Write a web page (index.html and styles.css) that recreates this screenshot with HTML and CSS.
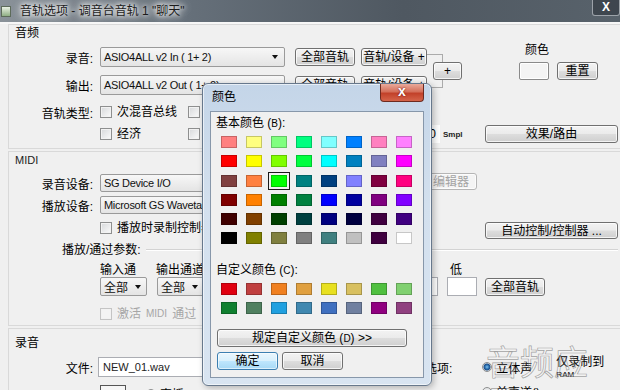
FILE: index.html
```html
<!DOCTYPE html>
<html lang="zh-CN">
<head>
  <meta charset="UTF-8">
  <title>音轨选项</title>
  <link rel="stylesheet" href="styles.css">
</head>
<body>
  <div class="window">
    <div class="titlebar">
      <span class="app-icon"></span>
      <span class="title">音轨选项 - 调音台音轨 1 "聊天"</span>
      <span class="win-close">X</span>
    </div>

    <!-- 音频 -->
    <section class="group audio">
      <h4>音频</h4>
      <div class="audio-body">
        <div class="io-rows">
          <div class="row">
            <span class="lbl">录音:</span>
            <div class="select io">ASIO4ALL v2 In ( 1+ 2)<i class="arrow"></i></div>
            <button class="btn all">全部音轨</button>
            <button class="btn dev">音轨/设备 +</button>
          </div>
          <div class="row">
            <span class="lbl">输出:</span>
            <div class="select io">ASIO4ALL v2 Out ( 1+ 2)<i class="arrow"></i></div>
            <button class="btn all">全部音轨</button>
            <button class="btn dev">音轨/设备 +</button>
          </div>
        </div>
        <div class="plus-wrap">
          <span class="bracket"></span>
          <button class="btn plus">+</button>
        </div>
        <div class="color-col">
          <div class="color-lbl">颜色</div>
          <div class="color-row">
            <span class="swatch-box"></span>
            <button class="btn reset">重置</button>
          </div>
        </div>
      </div>
      <div class="row type-row">
        <span class="lbl">音轨类型:</span>
        <label class="check first"><i class="chk"></i>次混音总线</label>
        <label class="check"><i class="chk"></i>输入监视</label>
      </div>
      <div class="row eco-row">
        <span class="lbl"></span>
        <label class="check first"><i class="chk"></i>经济</label>
        <label class="check"><i class="chk"></i></label>
        <span class="num offset">0</span>
        <span class="smpl">Smpl</span>
        <button class="btn wide-btn">效果/路由</button>
      </div>
    </section>

    <!-- MIDI -->
    <section class="group midi">
      <h4 class="latin">MIDI</h4>
      <div class="row dev-row first-dev">
        <span class="lbl">录音设备:</span>
        <div class="select mid">SG Device I/O<i class="arrow"></i></div>
        <button class="btn edit" disabled>编辑器</button>
      </div>
      <div class="row dev-row">
        <span class="lbl">播放设备:</span>
        <div class="select mid">Microsoft GS Wavetable Synth<i class="arrow"></i></div>
      </div>
      <div class="row rec-row">
        <span class="lbl"></span>
        <label class="check first"><i class="chk"></i>播放时录制控制器</label>
        <button class="btn wide-btn">自动控制/控制器 ...</button>
      </div>
      <div class="row param-row">
        <span class="param-lbl">播放/通过参数:</span>
        <span class="etched"></span>
      </div>
      <div class="row ch-labels">
        <span class="c1">输入通</span>
        <span class="c2">输出通道</span>
        <span class="c3">低</span>
      </div>
      <div class="row ch-row">
        <div class="select small">全部<i class="arrow"></i></div>
        <div class="select small next">全部<i class="arrow"></i></div>
        <span class="box in-a"></span>
        <span class="box in-b"></span>
        <button class="btn all-low">全部音轨</button>
      </div>
      <div class="row thru-row">
        <label class="check disabled"><i class="chk"></i>激活 <span class="latin-sm">MIDI</span> 通过</label>
      </div>
    </section>

    <!-- 录音 -->
    <section class="group record">
      <h4>录音</h4>
      <div class="row file-row">
        <span class="lbl">文件:</span>
        <span class="box file">NEW_01.wav</span>
        <span class="opt-lbl">选项:</span>
        <label class="radio on"><i class="rd"></i>立体声</label>
        <span class="ram">仅录制到<br><small>RAM</small></span>
      </div>
      <div class="row last-row">
        <span class="pick"></span>
        <label class="radio live"><i class="rd"></i>直播(</label>
        <label class="radio mono"><i class="rd"></i>单声道()</label>
      </div>
    </section>

    <span class="watermark">音频应用</span>

    <!-- 颜色 dialog -->
    <div class="dialog">
      <div class="dlg-title">
        <span>颜色</span>
        <span class="dlg-close">x</span>
      </div>
      <div class="dlg-client">
        <div class="dlg-lbl">基本颜色 (<u>B</u>):</div>
        <div class="swatches basic">
          <i style="background:#ff8080"></i><i style="background:#ffff80"></i><i style="background:#80ff80"></i><i style="background:#00ff80"></i><i style="background:#80ffff"></i><i style="background:#0080ff"></i><i style="background:#ff80c0"></i><i style="background:#ff80ff"></i>
          <i style="background:#ff0000"></i><i style="background:#ffff00"></i><i style="background:#80ff00"></i><i style="background:#00ff40"></i><i style="background:#00ffff"></i><i style="background:#0080c0"></i><i style="background:#8080c0"></i><i style="background:#ff00ff"></i>
          <i style="background:#804040"></i><i style="background:#ff8040"></i><i class="sel" style="background:#00ff00"></i><i style="background:#008080"></i><i style="background:#004080"></i><i style="background:#8080ff"></i><i style="background:#800040"></i><i style="background:#ff0080"></i>
          <i style="background:#800000"></i><i style="background:#ff8000"></i><i style="background:#008000"></i><i style="background:#008040"></i><i style="background:#0000ff"></i><i style="background:#0000a0"></i><i style="background:#800080"></i><i style="background:#8000ff"></i>
          <i style="background:#400000"></i><i style="background:#804000"></i><i style="background:#004000"></i><i style="background:#004040"></i><i style="background:#000080"></i><i style="background:#000040"></i><i style="background:#400040"></i><i style="background:#400080"></i>
          <i style="background:#000000"></i><i style="background:#808000"></i><i style="background:#808040"></i><i style="background:#808080"></i><i style="background:#408080"></i><i style="background:#c0c0c0"></i><i style="background:#400040"></i><i style="background:#ffffff"></i>
        </div>
        <div class="dlg-lbl custom-lbl">自定义颜色 (<u>C</u>):</div>
        <div class="swatches custom">
          <i style="background:#e00010"></i><i style="background:#c04040"></i><i style="background:#f08020"></i><i style="background:#e0a040"></i><i style="background:#e8e020"></i><i style="background:#d8c060"></i><i style="background:#50c040"></i><i style="background:#80d070"></i>
          <i style="background:#108030"></i><i style="background:#508060"></i><i style="background:#20a0e0"></i><i style="background:#4088b0"></i><i style="background:#4070c0"></i><i style="background:#7080a0"></i><i style="background:#900080"></i><i style="background:#904080"></i>
        </div>
        <button class="btn define">规定自定义颜色 (<u>D</u>) &gt;&gt;</button>
        <div class="dlg-actions">
          <button class="btn ok">确定</button>
          <button class="btn cancel">取消</button>
        </div>
      </div>
    </div>
  </div>
</body>
</html>
```

FILE: styles.css
```css
/* Reset & Base */
* {
  margin: 0;
  padding: 0;
  box-sizing: border-box;
}

body {
  width: 620px;
  height: 390px;
  overflow: hidden;
  background: #f0f0f0;
  font-family: "Liberation Sans", "Noto Sans CJK SC", sans-serif;
  font-size: 12px;
  color: #000;
}

.window {
  position: relative;
  width: 620px;
  height: 390px;
  overflow: hidden;
}

/* Title bar */
.titlebar {
  height: 24px;
  display: flex;
  align-items: center;
  background: linear-gradient(to right, #8a9299 0%, #66707a 30%, #4f5861 65%, #58626b 100%);
  border-bottom: 2px solid #f7f7f7;
}

.app-icon {
  width: 10px;
  height: 11px;
  margin-left: 1px;
  background: linear-gradient(#eaf2e4, #8fae84);
  border: 1px solid #5d6b5a;
}

.title {
  margin-left: 9px;
  color: #1c1c1c;
  text-shadow: 0 0 4px #fff, 0 0 8px #fff, 0 0 10px #eee;
  line-height: 20px;
}

.win-close {
  margin-left: auto;
  align-self: flex-start;
  width: 28px;
  height: 16px;
  line-height: 15px;
  text-align: center;
  color: #fff;
  font-weight: bold;
  font-size: 12px;
  background: rgba(45, 52, 60, 0.6);
  border: 1px solid rgba(220, 225, 230, 0.6);
  border-top: none;
  border-radius: 0 0 3px 3px;
}

/* Groups */
.group {
  margin-left: 8px;
  border: 1px solid #d9d9d9;
  border-right: none;
}

.group h4 {
  font-weight: normal;
  font-size: 12px;
  line-height: 16px;
  height: 16px;
  padding-left: 6px;
}

h4.latin {
  font-size: 11px;
  color: #222;
}

.audio { height: 125px; }
.midi { margin-top: 2px; height: 175px; }
.record { margin-top: 2px; height: 62px; border-bottom: none; overflow: hidden; }
.record h4 { margin-top: 6px; }

.row {
  display: flex;
  align-items: center;
}

.lbl {
  flex: none;
  width: 84px;
  text-align: right;
}

/* Controls */
.select {
  display: flex;
  align-items: center;
  flex: none;
  margin-left: 7px;
  padding-left: 3px;
  border: 1px solid #9a9a9a;
  border-radius: 2px;
  background: linear-gradient(#f7f7f7, #e4e4e4);
  font-size: 11px;
  letter-spacing: -0.3px;
  color: #111;
  white-space: nowrap;
  overflow: hidden;
}

.select .arrow {
  margin-left: auto;
  margin-right: 6px;
  flex: none;
  width: 0;
  height: 0;
  border-left: 3px solid transparent;
  border-right: 3px solid transparent;
  border-top: 4px solid #111;
}

.select.io { width: 185px; height: 20px; }
.select.mid { width: 185px; height: 18px; }
.select.small {
  width: 47px;
  height: 19px;
  margin-left: 91px;
  font-size: 12px;
  letter-spacing: 0;
}
.select.small .arrow { margin-right: 5px; }
.select.small.next { margin-left: 10px; }

.btn {
  flex: none;
  font-family: inherit;
  font-size: 12px;
  color: #000;
  height: 18px;
  line-height: 16px;
  border: 1px solid #707070;
  border-radius: 3px;
  background: linear-gradient(#f3f3f3 0%, #ebebeb 48%, #dddddd 52%, #cfcfcf 100%);
  box-shadow: inset 0 0 0 1px rgba(255, 255, 255, 0.75);
}

.btn:disabled {
  color: #a3a3a3;
  border-color: #b5b5b5;
  background: #f4f4f4;
}

.btn.all { width: 60px; margin-left: 10px; }
.btn.dev { width: 66px; margin-left: 6px; }

.plus-wrap {
  display: flex;
  align-items: center;
}

.bracket {
  width: 16px;
  height: 34px;
  border: 1px solid #ababab;
  border-left: none;
}

.btn.plus {
  width: 29px;
  margin-left: -10px;
  font-size: 12px;
}

.audio-body {
  display: flex;
  align-items: center;
  margin-top: 6px;
}

.io-rows {
  display: flex;
  flex-direction: column;
  gap: 8px;
}

.io-rows .row { height: 20px; }

.color-col {
  align-self: flex-start;
  margin-left: 57px;
  margin-top: -4px;
}

.color-lbl {
  line-height: 14px;
  padding-left: 6px;
}

.color-row {
  display: flex;
  align-items: flex-start;
  margin-top: 5px;
}

.swatch-box {
  width: 30px;
  height: 18px;
  border: 1px solid #8a8a8a;
  border-radius: 2px;
  background: #f4f4f4;
  box-shadow: inset 0 0 0 1px #fff;
}

.btn.reset { width: 41px; margin-left: 8px; }

.check {
  display: flex;
  align-items: center;
  gap: 5px;
  line-height: 12px;
  white-space: nowrap;
}

.check.first { margin-left: 7px; width: 88px; }

.chk {
  flex: none;
  width: 12px;
  height: 12px;
  border: 1px solid #8e8f8f;
  background: linear-gradient(135deg, #d6d8da, #fbfbfb);
  box-shadow: inset 0 0 0 1px #f2f2f2;
}

.check.disabled {
  color: #a6a6a6;
  margin-left: 91px;
}
.check.disabled .chk {
  border-color: #c4c4c4;
  background: #f4f4f4;
}

.latin-sm { font-size: 10px; }

.type-row { margin-top: 10px; height: 14px; }
.eco-row { margin-top: 6px; height: 18px; }

.box {
  flex: none;
  height: 18px;
  border: 1px solid #abadb3;
  background: #fff;
}

.num {
  height: 18px;
  width: 37px;
  background: #fff;
  text-align: right;
  padding-right: 4px;
  line-height: 18px;
  font-size: 12px;
}
.num.offset { margin-left: 203px; }

.smpl {
  margin-left: 3px;
  font-size: 8px;
  font-weight: bold;
  color: #222;
}

.btn.wide-btn {
  width: 133px;
  margin-left: auto;
  margin-right: 2px;
}

/* MIDI */
.first-dev { margin-top: 6px; }
.dev-row { height: 18px; }
.dev-row + .dev-row { margin-top: 4px; }

.btn.edit {
  width: 52px;
  height: 17px;
  margin-left: 140px;
  margin-top: -3px;
}

.rec-row {
  margin-top: 8px;
  height: 17px;
  align-items: flex-start;
}
.rec-row .check { height: 12px; }
.rec-row .btn { height: 17px; }

.param-row {
  margin-top: 2px;
  height: 14px;
}

.param-lbl { margin-left: 53px; }

.etched {
  flex: 1;
  margin: 3px 2px 0 5px;
  border-top: 1px solid #d3d3d3;
  border-bottom: 1px solid #fff;
}

.ch-labels {
  margin-top: 6px;
  height: 14px;
}
.ch-labels .c1 { margin-left: 91px; width: 56px; }
.ch-labels .c2 { width: 294px; }

.ch-row {
  margin-top: 2px;
  height: 19px;
}
.box.in-a { width: 38px; margin-left: 196px; height: 19px; }
.box.in-b { width: 30px; margin-left: 9px; height: 19px; }
.btn.all-low { width: 60px; margin-left: 8px; }

.thru-row {
  margin-top: 11px;
  height: 13px;
}

/* Record */
.file-row {
  margin-top: 6px;
  height: 20px;
}

.box.file {
  width: 202px;
  height: 20px;
  margin-left: 5px;
  padding-left: 4px;
  line-height: 18px;
  font-size: 11px;
  color: #222;
}

.opt-lbl { margin-left: 125px; }

.radio {
  display: flex;
  align-items: center;
  gap: 4px;
  white-space: nowrap;
}

.rd {
  flex: none;
  width: 10px;
  height: 10px;
  border-radius: 50%;
  border: 1px solid #8e8f8f;
  background: radial-gradient(circle, #f8f8f8, #d9dbdd);
}

.radio.on .rd {
  background: radial-gradient(circle, #7ec2f0 0, #2a6fb0 2px, #1d4f8a 3px, #dfe3e8 4px);
}

.radio.on { margin-left: 30px; }

.ram {
  margin-left: 24px;
  line-height: 11px;
  font-size: 12px;
  margin-top: 2px;
}
.ram small { font-size: 8px; }

.last-row {
  margin-top: 6px;
  height: 20px;
  align-items: flex-start;
}

.pick {
  width: 26px;
  height: 20px;
  margin-left: 91px;
  margin-top: 2px;
  border: 1px solid #555;
  background: #f6f6f6;
}

.radio.live { margin-left: 20px; margin-top: 2px; }
.radio.mono { margin-left: 294px; }

.watermark {
  position: absolute;
  left: 486px;
  top: 341px;
  font-family: "Noto Sans CJK SC", sans-serif;
  font-size: 34px;
  line-height: 40px;
  color: rgba(255, 255, 255, 0.2);
  -webkit-text-stroke: 0.7px rgba(80, 80, 80, 0.5);
  pointer-events: none;
}

/* Color dialog */
.dialog {
  position: absolute;
  left: 202px;
  top: 83px;
  width: 230px;
  height: 303px;
  border: 1px solid #67788c;
  border-radius: 6px;
  background: linear-gradient(#c4d5e8 0%, #d3e0ee 40%, #d8e4f1 100%);
  box-shadow: inset 0 0 0 1px rgba(255, 255, 255, 0.6), 2px 2px 6px rgba(0, 0, 0, 0.25);
}

.dlg-title {
  display: flex;
  align-items: flex-start;
  height: 27px;
  padding-left: 9px;
}

.dlg-title span:first-child {
  line-height: 26px;
}

.dlg-close {
  margin-left: auto;
  margin-right: 7px;
  width: 44px;
  height: 18px;
  line-height: 15px;
  text-align: center;
  color: #fff;
  font-weight: bold;
  font-size: 14px;
  border: 1px solid #6e2a1f;
  border-top: none;
  border-radius: 0 0 4px 4px;
  background: linear-gradient(#e9a99a 0%, #d4705b 45%, #c2412a 55%, #d5644a 100%);
  text-shadow: 0 0 2px #600;
}

.dlg-client {
  margin: 0 7px;
  height: 267px;
  border: 1px solid #8797aa;
  background: #f0f0f0;
  padding: 4px 0 0 5px;
}

.dlg-lbl {
  line-height: 14px;
}

.dlg-lbl u { text-decoration: none; font-size: 10px; }

.swatches {
  display: grid;
  grid-template-columns: repeat(8, 16px);
  grid-auto-rows: 12px;
  column-gap: 9px;
  margin-left: 5px;
  margin-top: 5px;
}

.swatches.basic { row-gap: 7.3px; }
.swatches.custom { row-gap: 7px; }

.swatches i {
  box-shadow: inset 0 0 0 1px rgba(0, 0, 0, 0.22);
}

.swatches i.sel {
  outline: 1px solid #1a1a1a;
  outline-offset: 2px;
}

.custom-lbl { margin-top: 19px; }

.btn.define {
  display: block;
  width: 190px;
  margin: 15px 0 0 1px;
}

.btn u { text-decoration: none; font-size: 10px; }

.dlg-actions {
  display: flex;
  gap: 4px;
  margin: 5px 0 0 1px;
}

.btn.ok, .btn.cancel { width: 61px; }

.btn.ok {
  border-color: #3c7fb1;
  background: linear-gradient(#eaf6fd 0%, #d9f0fc 48%, #bee6fd 52%, #a7d9f5 100%);
  box-shadow: inset 0 0 0 1px rgba(255, 255, 255, 0.6);
}
```
